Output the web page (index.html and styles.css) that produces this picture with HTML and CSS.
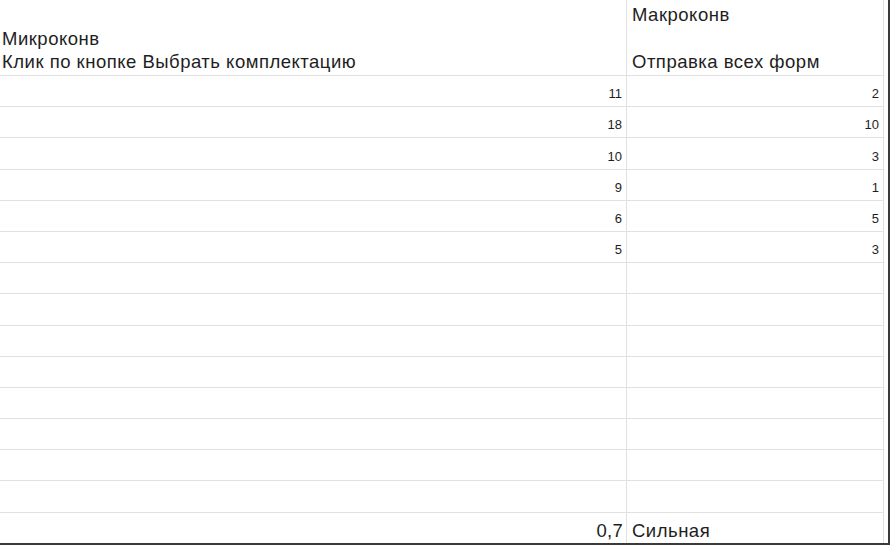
FILE: index.html
```html
<!DOCTYPE html>
<html lang="ru">
<head>
<meta charset="utf-8">
<title>Конверсии</title>
<link rel="stylesheet" href="styles.css">
</head>
<body>
<div class="frame">
  <div class="sheet">
    <div class="cell head"><div>Микроконв</div><div>Клик по кнопке Выбрать комплектацию</div></div>
    <div class="cell head"><div>Макроконв</div><div>&nbsp;</div><div>Отправка всех форм</div></div>

    <div class="cell num">11</div><div class="cell num">2</div>
    <div class="cell num">18</div><div class="cell num">10</div>
    <div class="cell num">10</div><div class="cell num">3</div>
    <div class="cell num">9</div><div class="cell num">1</div>
    <div class="cell num">6</div><div class="cell num">5</div>
    <div class="cell num">5</div><div class="cell num">3</div>

    <div class="cell"></div><div class="cell"></div>
    <div class="cell"></div><div class="cell"></div>
    <div class="cell"></div><div class="cell"></div>
    <div class="cell"></div><div class="cell"></div>
    <div class="cell"></div><div class="cell"></div>
    <div class="cell"></div><div class="cell"></div>
    <div class="cell"></div><div class="cell"></div>
    <div class="cell"></div><div class="cell"></div>

    <div class="cell big right">0,7</div><div class="cell big">Сильная</div>
  </div>
</div>
</body>
</html>
```

FILE: styles.css
```css
html, body {
  margin: 0;
  padding: 0;
  background: #ffffff;
}

.frame {
  width: 890px;
  height: 545px;
  box-sizing: border-box;
  border-right: 2px solid #3a3a3a;
  border-bottom: 2px solid #3a3a3a;
  overflow: hidden;
  background: #ffffff;
}

.sheet {
  display: grid;
  grid-template-columns: 627px 257px;
  grid-template-rows: 76px;
  grid-auto-rows: 31.2px;
  width: 884px;
  font-family: "Liberation Sans", Arial, sans-serif;
  color: #1e1e1e;
}

.cell {
  box-sizing: border-box;
  border-right: 1px solid #e1e1e1;
  border-bottom: 1px solid #e1e1e1;
  display: flex;
  flex-direction: column;
  justify-content: flex-end;
  overflow: hidden;
  white-space: nowrap;
}

.head {
  font-size: 18.5px;
  letter-spacing: 0.5px;
  line-height: 23.5px;
  padding: 0 4px 1.5px 5px;
}

.sheet > .head:first-child {
  padding-left: 2px;
}

.num {
  font-size: 13px;
  line-height: 15px;
  text-align: right;
  align-items: flex-end;
  padding: 0 4px 5px 4px;
}

.big {
  font-size: 18.5px;
  letter-spacing: 0.5px;
  line-height: 20px;
  padding: 0 4px 2px 5px;
}

.right {
  align-items: flex-end;
  padding-right: 3px;
  letter-spacing: 0.3px;
}
```
